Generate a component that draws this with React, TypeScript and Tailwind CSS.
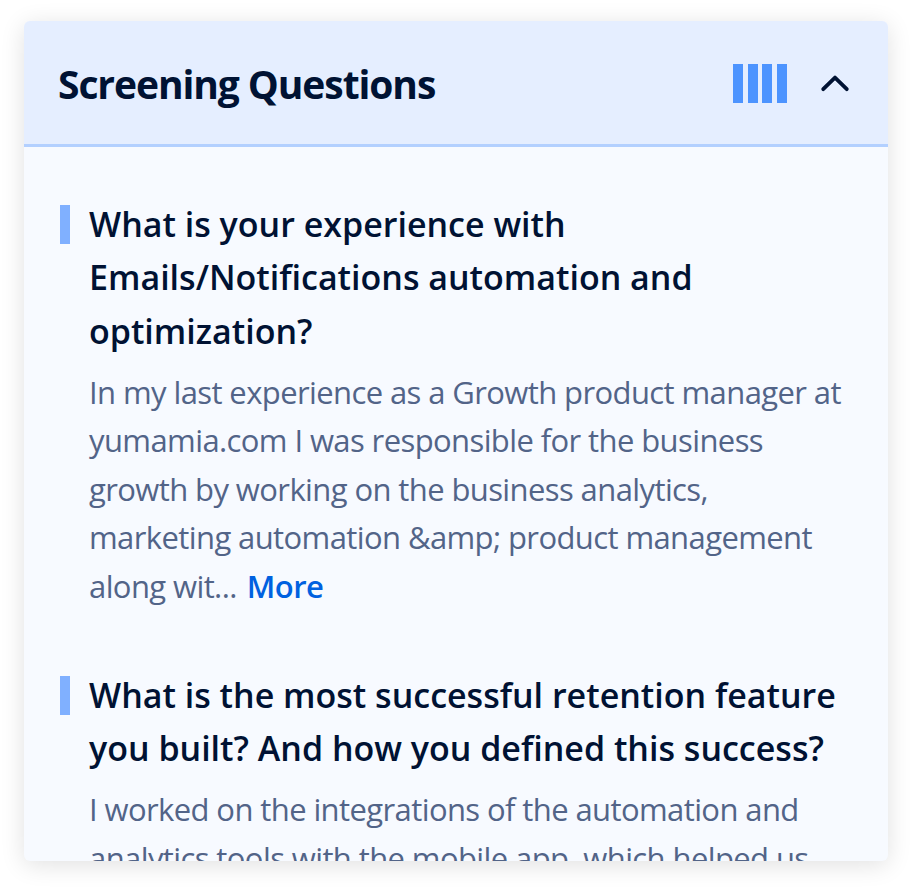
import React from 'react';

const lineBody = 'block whitespace-nowrap';

function Question({ title, children }: { title: string[]; children: React.ReactNode }) {
  return (
    <section className="flex gap-[19px]">
      <div className="mt-[7px] h-[39px] w-[10px] shrink-0 bg-[#80b0ff]" />
      <div>
        <h3 className="text-[34px] leading-[53.4px] font-semibold text-[#001233]">
          {title.map((t) => <span key={t} className={lineBody}>{t}</span>)}
        </h3>
        <div className="mt-[9.7px] text-[31px] leading-[48.5px] tracking-[-0.6px] text-[#526488]">{children}</div>
      </div>
    </section>
  );
}

export default function App() {
  return (
    <div className="h-[888px] w-[912px] overflow-hidden bg-white pl-[24px] pt-[21px] font-['Open_Sans',sans-serif]">
      <main className="h-[840px] w-[864px] overflow-hidden rounded-[6px] bg-[#f7faff] shadow-[0_4px_24px_rgba(0,0,0,0.12)]">
        <header className="flex h-[126px] items-center border-b-[3px] border-[#b3d0ff] bg-[#e5eeff] pl-[34px] pr-[38px] pt-[2px]">
          <h2 className="mt-[2px] whitespace-nowrap text-[39px] font-bold tracking-[-1.08px] text-[#001233]">Screening Questions</h2>
          <div className="ml-auto flex gap-[4.6px]">
            {[0, 1, 2, 3].map((n) => <span key={n} className="h-[39px] w-[10px] bg-[#4d94ff]" />)}
          </div>
          <svg className="ml-[33px]" width="30" height="20" viewBox="0 0 30 20" fill="none" stroke="#001233" strokeWidth="3.8" strokeLinecap="round" strokeLinejoin="round"><path d="M3.2 15.2L15 3.6L26.8 15.2" /></svg>
        </header>
        <div className="flex flex-col gap-[58.2px] pl-[36px] pt-[51px]">
          <Question title={['What is your experience with', 'Emails/Notifications automation and', 'optimization?']}>
            <span className={lineBody}>In my last experience as a Growth product manager at</span>
            <span className={lineBody}>yumamia.com I was responsible for the business</span>
            <span className={lineBody}>growth by working on the business analytics,</span>
            <span className={lineBody}>marketing automation &amp;amp; product management</span>
            <span className={lineBody}>along wit<span className="font-medium">...</span><span className="ml-[10px] font-semibold tracking-[-0.5px] text-[#0061e0]">More</span></span>
          </Question>
          <Question title={['What is the most successful retention feature', 'you built? And how you defined this success?']}>
            <span className={lineBody}>I worked on the integrations of the automation and</span>
            <span className={lineBody}>analytics tools with the mobile app, which helped us</span>
          </Question>
        </div>
      </main>
    </div>
  );
}
